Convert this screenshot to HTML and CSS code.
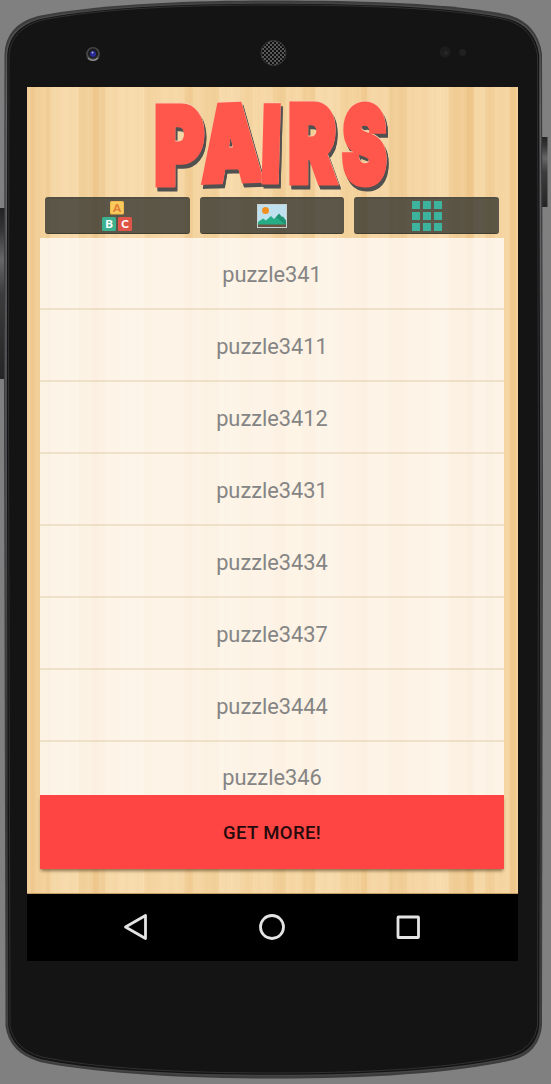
FILE: index.html
```
<!DOCTYPE html>
<html lang="en">
<head>
<meta charset="utf-8">
<title>Pairs</title>
<link rel="stylesheet" href="styles.css">
</head>
<body>
<div class="device">
  <svg class="body-art" viewBox="0 0 551 1084" aria-hidden="true">
    <defs>
      <linearGradient id="edge" x1="0" y1="0" x2="0" y2="1"><stop offset="0" stop-color="#444"/><stop offset=".1" stop-color="#66676a"/><stop offset=".45" stop-color="#55565a"/><stop offset=".75" stop-color="#333"/><stop offset="1" stop-color="#444"/></linearGradient>
      <linearGradient id="key" x1="0" y1="0" x2="0" y2="1"><stop offset="0" stop-color="#222"/><stop offset=".12" stop-color="#333"/><stop offset=".3" stop-color="#666"/><stop offset=".5" stop-color="#3c3c3c"/><stop offset="1" stop-color="#252525"/></linearGradient>
      <pattern id="mesh" width="4" height="4" patternUnits="userSpaceOnUse"><path d="M0 0h4v4H0z" fill="#5c5c5c"/><circle cx="1" cy="1" r="1.150" fill="#0b0b0b"/><circle cx="3" cy="3" r="1.150" fill="#0b0b0b"/></pattern>
    </defs>
    <rect x="-4" y="208" width="9" height="171" fill="url(#key)"/>
    <rect x="542" y="137" width="5.500" height="70" fill="url(#key)"/>
    <path d="M4 400L4.500 55Q5 25 38 16C100 4 190 .5 274 .5S455 3 509 15Q538 24 542 54L543 500L542 1026Q539 1053 513 1060C455 1073 370 1078.500 274 1078.500S95 1073 40 1062Q9 1053 5.500 1026Z" fill="#3c3c3d"/>
    <path d="M6 400L6.500 55Q8 28 39 18.500C100 6 190 3 274 3S455 6 508 18Q536 26 540 55L541 500L540 1026Q537 1051 512 1057.500C455 1070.500 370 1075.500 274 1075.500S95 1071 41 1060Q11 1051 7.500 1026Z" fill="#141414" stroke="url(#edge)" stroke-width="1.500"/>
    <path d="M8.500 400L9 55Q11 30 40 20.500C100 8 190 5 274 5S455 8 507 20Q533 28 537.500 55L538.500 500L537.500 1026Q534 1048 511 1055C455 1068 370 1073 274 1073S95 1068 42 1057Q14 1049 10 1026Z" fill="#141414" stroke="#303031"/>
    <circle cx="93" cy="54" r="7" fill="#454545"/><path d="M88 58a6.500 6.500 0 0 0 10 0" fill="none" stroke="#8a8a8a" stroke-width="1.500"/><circle cx="93" cy="53.500" r="5" fill="#1b1b20"/><circle cx="93" cy="54" r="3" fill="#2a2a98"/><circle cx="92.500" cy="52.500" r="1" fill="#a9b4dd"/>
    <circle cx="273.500" cy="53" r="12.500" fill="url(#mesh)" stroke="#383838"/>
    <circle cx="445" cy="52" r="5.500" fill="#1d1d1d"/><circle cx="446" cy="53" r="2" fill="#282828"/><circle cx="462.500" cy="52.500" r="3.500" fill="#202020"/>
  </svg>

  <main class="screen">
    <div class="app">
      <svg class="logo" viewBox="0 0 464 110" role="img" aria-label="Pairs">
        <g class="logo-text">
          <g><text transform="translate(114.500 96.500) scale(.71 1)">P</text></g>
          <g><text transform="translate(162.500 94.500) rotate(-2) scale(.71 .97)">A</text></g>
          <g><text transform="translate(221 94) skewX(-1.500) scale(.6 .96)">I</text></g>
          <g><text transform="translate(248.500 95) scale(.67 1)">R</text></g>
          <g><text transform="translate(302.500 96) scale(.62 1)">S</text></g>
        </g>
      </svg>
      <div class="tabs">
        <button class="tab" aria-label="Words">
          <svg width="30" height="30" viewBox="0 0 30 30" class="blocks"><rect x="8" y="0" width="14" height="13.500" rx="1.500" fill="#f3b94c"/><rect x="9" y="1" width="12" height="11.500" rx="1" fill="#f9ca5c"/><rect x="0" y="16" width="14" height="14" rx="1.500" fill="#3bb18f"/><rect x="16" y="16" width="14" height="14" rx="1.500" fill="#df5548"/><text x="15" y="11" fill="#e07c35">A</text><text x="7" y="27" fill="#fff">B</text><text x="23" y="27" fill="#fff">C</text></svg>
        </button>
        <button class="tab" aria-label="Pictures">
          <svg width="30" height="24" viewBox="0 0 30 24"><path d="M0 0h30v24H0z" fill="#c9d2d2"/><path d="M1 1h28v22H1z" fill="#bfe0ee"/><circle cx="8.500" cy="6.500" r="3.500" fill="#f0901f"/><path d="M12 21l10-11.500 3 3.500 1-.5 3 4V21z" fill="#1f9273"/><path d="M1 21v-3l5-3.500 3 2 5-4.500 3 3 3-1.500 5 4.500 4 3z" fill="#27ad86"/><path d="M1 20.500h28V23H1z" fill="#6d5543"/></svg>
        </button>
        <button class="tab" aria-label="Grid">
          <svg width="30" height="30" viewBox="0 0 30 30" fill="#3db39e"><path d="M0 0h8v8H0zM11 0h8v8h-8zM22 0h8v8h-8zM0 11h8v8H0zM11 11h8v8h-8zM22 11h8v8h-8zM0 22h8v8H0zM11 22h8v8h-8zM22 22h8v8h-8z"/></svg>
        </button>
      </div>
      <ul class="list">
        <li>puzzle341</li>
        <li>puzzle3411</li>
        <li>puzzle3412</li>
        <li>puzzle3431</li>
        <li>puzzle3434</li>
        <li>puzzle3437</li>
        <li>puzzle3444</li>
        <li class="last">puzzle346</li>
      </ul>
      <button class="more">GET MORE!</button>
    </div>
    <nav class="nav">
      <svg width="28" height="28" viewBox="0 0 28 28"><path d="M3.500 14L23.500 2.500v23z"/></svg>
      <svg width="28" height="28" viewBox="0 0 28 28"><circle cx="14" cy="14" r="11.500"/></svg>
      <svg width="28" height="28" viewBox="0 0 28 28"><rect x="4" y="4" width="20.500" height="20.500" rx=".5"/></svg>
    </nav>
  </main>
</div>
</body>
</html>
```
FILE: styles.css
```
* { box-sizing: border-box; }
body { margin: 0; background: #808080; font-family: Roboto, "Liberation Sans", sans-serif; }
button { border: 0; padding: 0; font-family: inherit; }
svg { display: block; flex: none; }

.device { position: relative; width: 551px; height: 1084px; padding: 87px 33px 0 27px; overflow: hidden; }
.body-art { position: absolute; left: 0; top: 0; width: 551px; height: 1084px; }
.screen { position: relative; display: flex; flex-direction: column; width: 491px; height: 874px; background: #000; }

.app {
  display: flex;
  flex-direction: column;
  height: 807px;
  padding: 0 14px 24px 13px;
  border-bottom: 1px solid #c29c62;
  background:
    repeating-linear-gradient(90deg, rgba(190,130,60,.03) 0 1px, transparent 2px 5px, rgba(255,240,205,.08) 6px 7px, transparent 8px 11px),
    linear-gradient(90deg,
      #f3d09a 0 3px, #eec68a 5px 7px, #f3d09a 9px 18px, #f1cd96 19px 22px, #f5d7a6 24px 31px, #f7daab 32px 51px,
      #f2d09a 52px 65px, #eec78d 67px 71px, #f1ce97 73px 77px, #f6d8a7 79px 91px, #f7dbad 92px 117px,
      #f4d4a0 118px 130px, #f6d8a7 132px 156px, #f0ca91 160px 164px, #f4d4a0 166px 177px, #f2d099 179px 191px,
      #f7daab 193px 212px, #f4d39e 214px 225px, #f6d8a6 227px 245px, #f1ce96 247px 258px, #f6d7a4 260px 275px,
      #f1ce96 277px 287px, #f7daaa 289px 312px, #f4d29c 314px 334px, #efc88d 335px 339px, #f5d6a4 341px 361px,
      #f1ce97 363px 379px, #f5d6a4 382px 402px, #f7dbad 404px 421px, #f1cd96 423px 438px, #eec68a 441px 446px,
      #f6d8a7 448px 457px, #f2cf98 459px 467px, #f5d5a2 469px 482px, #f0c98d 484px 488px, #f3d09a 491px);
}

.logo { width: 464px; height: 110px; overflow: visible; }
.logo-text {
  font-family: Inter, sans-serif;
  font-weight: 900;
  font-size: 106px;
  fill: #ff574b;
  stroke: #ff574b;
  stroke-width: 6px;
  stroke-linejoin: miter;
  stroke-miterlimit: 2;
}
.logo-text g { filter: drop-shadow(.5px -1px 0 #f9cfae) drop-shadow(2px 4px 0 #505050); }
.logo-text text { vector-effect: non-scaling-stroke; }

.tabs { display: grid; grid-template-columns: 145px 144px 145px; gap: 10px; padding: 0 5px; height: 37px; }
.tab { display: grid; place-items: center; border-radius: 3px; background: rgba(52,54,48,.8); border-top: 2px solid rgba(80,78,66,.7); border-bottom: 1px solid rgba(55,53,43,.7); }
.blocks { margin-right: 1px; font-family: Lato, sans-serif; font-weight: 900; font-size: 11.5px; text-anchor: middle; }

.list { flex: 1; margin: 4px 0 0; padding: 0; list-style: none; overflow: hidden; background: rgba(255,252,251,.76); min-height: 0; }
.list li { display: flex; align-items: center; justify-content: center; height: 72px; padding-top: 3px; border-bottom: 2px solid rgba(215,190,155,.36); font-size: 21.8px; color: #858585; }
.list .last { padding-top: 1px; }

.more { height: 74px; flex: none; background: #ff4444; box-shadow: 0 3px 3px -1px rgba(70,50,20,.6); font-size: 18.5px; letter-spacing: .4px; padding-top: 2px; font-weight: 500; color: #250b0b; }

.nav { display: flex; justify-content: space-between; padding: 19px 96px 0 95px; height: 67px; }
.nav svg { fill: none; stroke: #e4e4e4; stroke-width: 2.8; stroke-linejoin: round; }
```
